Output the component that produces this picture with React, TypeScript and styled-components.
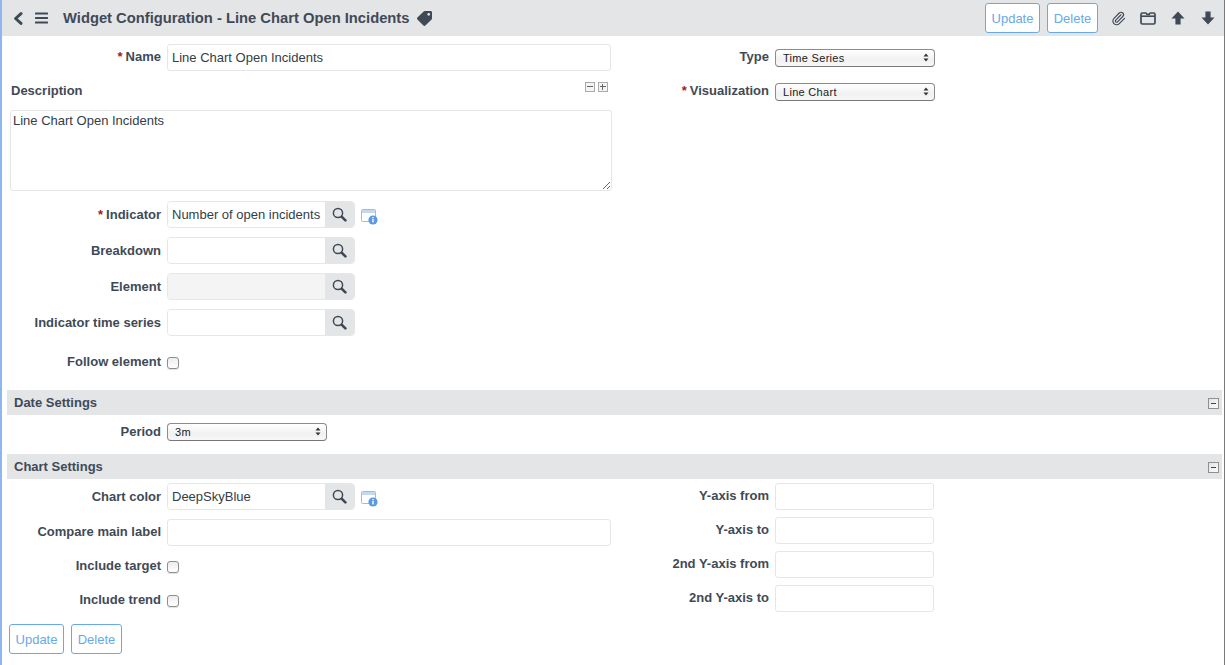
import React from "react";
import styled, { createGlobalStyle } from "styled-components";
import { FaTag } from "react-icons/fa";
import { Paperclip } from "lucide-react";

const Global = createGlobalStyle`
  html, body { margin: 0; padding: 0; background: #fff; }
  body { font-family: "Liberation Sans", Arial, sans-serif; font-size: 13px; color: #343d47; }
  * { box-sizing: border-box; }
`;
const Page = styled.div`
  width: 1225px; height: 665px; overflow: hidden; background: #fff;
  border-left: 2px solid #8fb6ee; border-right: 1px solid #7a7a7a;
  display: flex; flex-direction: column;
`;
const Header = styled.header`
  height: 36px; flex: none; background: #e4e5e7; display: flex; align-items: center;
  padding: 0 10px 0 11px; margin-right: -1px; color: #3f4a56;
`;
const IconBtn = styled.span<{ $w?: number; $ml?: number }>`
  display: inline-flex; align-items: center; justify-content: center; width: ${p => p.$w ?? 16}px;
  margin-left: ${p => p.$ml ?? 0}px; color: #3f4a56; flex: none;
`;
const Title = styled.h1`
  margin: 0 0 0 15px; font-size: 14.75px; font-weight: 700; color: #3f4a56; white-space: nowrap;
`;
const Spacer = styled.div`flex: 1;`;
const Button = styled.button<{ $w: number; $ml?: number }>`
  height: 30px; width: ${p => p.$w}px; padding: 0; font: 13px "Liberation Sans", Arial, sans-serif; color: #68a9ea; background: #fff;
  border: 1px solid #68a9ea; border-radius: 3px; margin-left: ${p => p.$ml ?? 0}px; flex: none;
`;
const Columns = styled.div`display: grid; grid-template-columns: 610px 1fr; flex: none;`;
const Col = styled.div`display: flex; flex-direction: column;`;
const Row = styled.div<{ $h?: number; $mt?: number }>`
  display: flex; align-items: center; height: ${p => p.$h ?? 27}px; margin-top: ${p => p.$mt ?? 0}px;
`;
const Label = styled.label<{ $w?: number; $low?: boolean }>`
  width: ${p => p.$w ?? 159}px; flex: none; text-align: right; font-weight: 700; font-size: 13px; color: #3f4a56; white-space: nowrap;
  position: relative; top: ${p => (p.$low ? 0 : -1)}px;
`;
const Req = styled.span`color: #a02020; margin-right: 3px;`;
const Input = styled.input<{ $w?: number; $ml?: number }>`
  width: ${p => p.$w ?? 444}px; height: 27px; margin-left: ${p => p.$ml ?? 6}px; flex: none; padding: 0 4px;
  border: 1px solid #e4e6e8; border-radius: 3px; background: #fff;
  font: 13px "Liberation Sans", Arial, sans-serif; color: #343d47; outline: none;
`;
const LookupWrap = styled.div`
  margin-left: 6px; width: 188px; height: 27px; display: flex; flex: none; border: 1px solid #e4e6e8; border-radius: 4px; overflow: hidden;
`;
const LookupInput = styled.input<{ $disabled?: boolean }>`
  flex: 1; min-width: 0; border: 0; padding: 0 4px; outline: none;
  background: ${p => (p.$disabled ? "#f4f4f4" : "#fff")};
  font: 13px "Liberation Sans", Arial, sans-serif; color: #343d47;
`;
const LookupBtn = styled.span`
  width: 29px; flex: none; background: #e4e5e7; display: flex; align-items: center; justify-content: center; color: #3f4a56;
`;
const RefIcon = styled.span`display: inline-flex; margin-left: 6px; position: relative; top: 2px;`;
const Check = styled.span`
  width: 12px; height: 12px; margin-left: 6px; border: 1px solid #8e8e8e; border-radius: 3px;
  background: linear-gradient(#ececec, #fff); box-shadow: 0 1px 1px rgba(0,0,0,.12); flex: none;
`;
const SelectBox = styled.div<{ $w: number; $ml?: number }>`
  width: ${p => p.$w}px; height: 18px; margin-left: ${p => p.$ml ?? 6}px; flex: none; display: flex; align-items: center; justify-content: space-between;
  padding: 0 5px 0 7px; border: 1px solid #8c8c8c; border-bottom-color: #777; border-radius: 4px;
  background: linear-gradient(#fff, #f1f1f1 60%, #f7f7f7); font-size: 11px; letter-spacing: 0.3px; color: #1a1a1a;
`;
const DescHead = styled.div`
  display: flex; align-items: center; justify-content: space-between; height: 20px; margin-top: 9px; padding: 0 4px 0 9px;
`;
const DescLabel = styled.span`font-weight: 700; font-size: 13px; color: #3f4a56;`;
const Toggles = styled.span`display: inline-flex; gap: 3px; position: relative; top: -3px;`;
const TextArea = styled.textarea`
  display: block; width: 602px; height: 81px; margin: 10px 0 0 8px; padding: 2px; resize: vertical; outline: none;
  border: 1px solid #e4e6e8; border-radius: 3px; font: 13px/1.2 "Liberation Sans", Arial, sans-serif; color: #343d47;
`;
const Section = styled.div<{ $mt: number }>`
  margin: ${p => p.$mt}px 2px 0 5px; height: 25px; background: #e4e5e7; display: flex; align-items: center; justify-content: space-between;
  padding: 0 3px 0 7px; font-weight: 700; font-size: 13px; color: #3f4a56; flex: none;
`;
const Collapse = styled.span`
  width: 11px; height: 11px; border: 1px solid #8f8f8f; background: linear-gradient(135deg, #e4e4e4, #fafafa); display: flex; align-items: center; justify-content: center;
  position: relative; top: 1px;
  &::after { content: ""; width: 5px; height: 1px; background: #444; }
`;
const Mini = styled.span<{ $plus?: boolean }>`
  width: 10px; height: 10px; border: 1px solid #aaa; background: #f4f4f4; position: relative;
  &::after { content: ""; position: absolute; left: 1px; right: 1px; top: 3px; height: 1px; background: #666; }
  &::before { content: ""; position: absolute; top: 1px; bottom: 1px; left: 3px; width: 1px; background: #666; display: ${p => (p.$plus ? "block" : "none")}; }
`;
const Footer = styled.div`display: flex; gap: 7px; margin: 10px 0 0 7px; height: 30px; flex: none;`;

const Arrows = () => (
  <svg width="6" height="9" viewBox="0 0 6 9"><path d="M3 0.5 5.5 3.5H.5zM3 8.5 .5 5.5h5z" fill="#333" /></svg>
);
const Select: React.FC<{ w: number; ml?: number; v: string }> = ({ w, ml, v }) => (
  <SelectBox $w={w} $ml={ml}><span>{v}</span><Arrows /></SelectBox>
);
const Ref = () => (
  <RefIcon>
    <svg width="17" height="16" viewBox="0 0 17 16">
      <rect x=".5" y=".5" width="14" height="12" rx="1" fill="#fff" stroke="#9dbde0" />
      <rect x="1" y="1" width="13" height="3" fill="#c4d9ef" />
      <circle cx="12" cy="11" r="4.6" fill="#5a9be0" />
      <rect x="11.3" y="10" width="1.4" height="3.4" fill="#fff" />
      <rect x="11.3" y="8" width="1.4" height="1.3" fill="#fff" />
    </svg>
  </RefIcon>
);
const SearchGlyph = () => (
  <svg width="15" height="15" viewBox="0 0 15 15">
    <circle cx="6" cy="6" r="4.6" fill="none" stroke="#3f4a56" strokeWidth="1.5" />
    <path d="M9.6 9.6 13.4 13.4" stroke="#3f4a56" strokeWidth="2.6" strokeLinecap="round" />
  </svg>
);
const Lookup: React.FC<{ v?: string; disabled?: boolean }> = ({ v, disabled }) => (
  <LookupWrap>
    <LookupInput readOnly value={v ?? ""} $disabled={disabled} />
    <LookupBtn><SearchGlyph /></LookupBtn>
  </LookupWrap>
);
const Folder = () => (
  <svg width="16" height="13" viewBox="0 0 16 13">
    <path d="M1 4V2.4Q1 1 2.4 1h3.2q.7 0 1 .6l.4.7h2.2l.5-.9q.3-.4.8-.4h3.1Q15 1 15 2.4v8.2q0 1.4-1.4 1.4H2.4Q1 12 1 10.6z" fill="none" stroke="#3f4a56" strokeWidth="1.7" />
    <path d="M1 4.2h14" stroke="#3f4a56" strokeWidth="1.6" />
  </svg>
);
const Chevron = () => (
  <svg width="10" height="13" viewBox="0 0 10 13">
    <path d="M8 1.6 2.6 6.5 8 11.4" fill="none" stroke="#3f4a56" strokeWidth="3" strokeLinecap="round" strokeLinejoin="round" />
  </svg>
);
const Bars = () => (
  <svg width="13" height="12" viewBox="0 0 13 12">
    <rect x="0" y="0.5" width="13" height="2" rx=".6" fill="#3f4a56" />
    <rect x="0" y="5" width="13" height="2" rx=".6" fill="#3f4a56" />
    <rect x="0" y="9.5" width="13" height="2" rx=".6" fill="#3f4a56" />
  </svg>
);
const ArrowUp = () => (
  <svg width="14" height="14" viewBox="0 0 14 14">
    <path d="M7 .5 13.5 7.5H9.6V13.5H4.4V7.5H.5z" fill="#3f4a56" />
  </svg>
);
const ArrowDown = () => (
  <svg width="14" height="14" viewBox="0 0 14 14">
    <path d="M7 13.5 13.5 6.5H9.6V.5H4.4V6.5H.5z" fill="#3f4a56" />
  </svg>
);

export default function App() {
  return (
    <Page>
      <Global />
      <Header>
        <IconBtn $w={10}><Chevron /></IconBtn>
        <IconBtn $w={13} $ml={12}><Bars /></IconBtn>
        <Title>Widget Configuration - Line Chart Open Incidents</Title>
        <IconBtn $w={15} $ml={8}><FaTag size={15} style={{ transform: "scaleX(-1)" }} /></IconBtn>
        <Spacer />
        <Button $w={55}>Update</Button>
        <Button $w={51} $ml={7}>Delete</Button>
        <IconBtn $w={15} $ml={13}><Paperclip size={15} strokeWidth={1.8} /></IconBtn>
        <IconBtn $w={16} $ml={14}><Folder /></IconBtn>
        <IconBtn $w={14} $ml={15}><ArrowUp /></IconBtn>
        <IconBtn $w={14} $ml={16}><ArrowDown /></IconBtn>
      </Header>
      <Columns>
        <Col>
          <Row $mt={8}>
            <Label><Req>*</Req>Name</Label>
            <Input readOnly value="Line Chart Open Incidents" />
          </Row>
          <DescHead>
            <DescLabel>Description</DescLabel>
            <Toggles><Mini /><Mini $plus /></Toggles>
          </DescHead>
          <TextArea readOnly value="Line Chart Open Incidents" />
          <Row $mt={10}>
            <Label $low><Req>*</Req>Indicator</Label>
            <Lookup v="Number of open incidents" /><Ref />
          </Row>
          <Row $mt={9}><Label $low>Breakdown</Label><Lookup /></Row>
          <Row $mt={9}><Label $low>Element</Label><Lookup disabled /></Row>
          <Row $mt={9}><Label $low>Indicator time series</Label><Lookup /></Row>
          <Row $mt={13}><Label>Follow element</Label><Check /></Row>
        </Col>
        <Col>
          <Row $mt={8}>
            <Label $w={157}>Type</Label>
            <Select w={160} v="Time Series" />
          </Row>
          <Row $mt={7}>
            <Label $w={157}><Req>*</Req>Visualization</Label>
            <Select w={160} v="Line Chart" />
          </Row>
        </Col>
      </Columns>
      <Section $mt={14}>Date Settings<Collapse /></Section>
      <Row $mt={3}>
        <Label $low>Period</Label>
        <Select w={160} v="3m" />
      </Row>
      <Section $mt={9}>Chart Settings<Collapse /></Section>
      <Columns>
        <Col>
          <Row $mt={4}><Label $low>Chart color</Label><Lookup v="DeepSkyBlue" /><Ref /></Row>
          <Row $mt={9}><Label>Compare main label</Label><Input readOnly value="" /></Row>
          <Row $mt={7}><Label>Include target</Label><Check /></Row>
          <Row $mt={7}><Label>Include trend</Label><Check /></Row>
        </Col>
        <Col>
          <Row $mt={4}><Label $w={157}>Y-axis from</Label><Input $w={159} readOnly value="" /></Row>
          <Row $mt={7}><Label $w={157}>Y-axis to</Label><Input $w={159} readOnly value="" /></Row>
          <Row $mt={7}><Label $w={157}>2nd Y-axis from</Label><Input $w={159} readOnly value="" /></Row>
          <Row $mt={7}><Label $w={157}>2nd Y-axis to</Label><Input $w={159} readOnly value="" /></Row>
        </Col>
      </Columns>
      <Footer>
        <Button $w={55}>Update</Button>
        <Button $w={51}>Delete</Button>
      </Footer>
    </Page>
  );
}
